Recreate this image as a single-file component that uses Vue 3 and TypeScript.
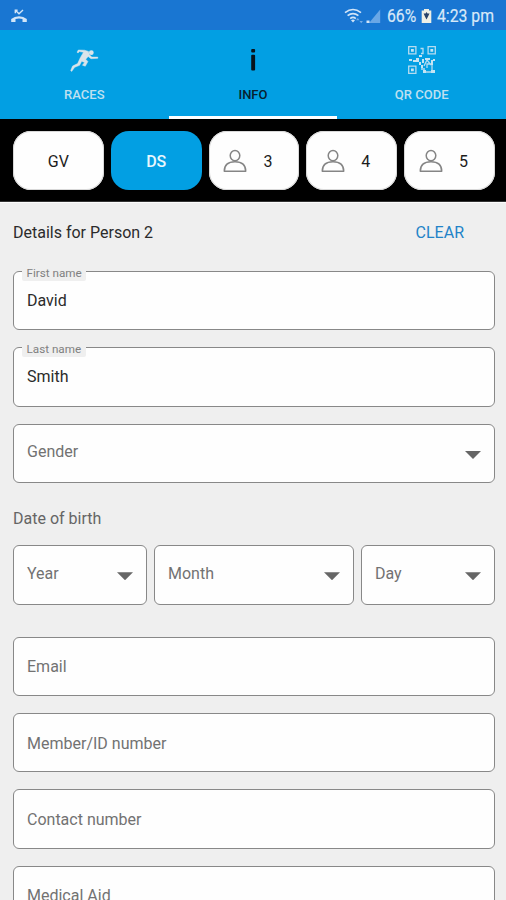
<script setup lang="ts">
import { ref } from 'vue'

interface Chip { label: string; icon: boolean }
interface Field { label: string; value?: string }

const chips: Chip[] = [
  { label: 'GV', icon: false },
  { label: 'DS', icon: false },
  { label: '3', icon: true },
  { label: '4', icon: true },
  { label: '5', icon: true },
]
const activeChip = ref(1)
const named: Field[] = [
  { label: 'First name', value: 'David' },
  { label: 'Last name', value: 'Smith' },
]
const dateParts = ['Year', 'Month', 'Day']
const contact = ['Email', 'Member/ID number', 'Contact number', 'Medical Aid']
</script>

<template>
  <div class="screen">
    <header class="status">
      <svg class="missed" width="18" height="16" viewBox="0 0 18 16">
        <path d="M5.300 5.300V2M4.600 2.200h3M5.400 2.300l3.600 3.400L13 2" fill="none" stroke="#d3e5f8" stroke-width="1.400" />
        <path d="M1.200 14V11Q4.500 8.300 9 8.300t7.800 2.700v3h-4.300v-3Q9 10 5.500 11v3Z" fill="#d3e5f8" />
      </svg>
      <div class="indicators">
        <svg class="wifi" width="20" height="17" viewBox="0 0 20 17">
          <g fill="none" stroke="#d3e5f8" stroke-width="1.7">
            <path d="M1 4.6Q9 -1.6 17 4.6" />
            <path d="M3.6 7.7Q9 3.4 14.4 7.7" />
            <path d="M6.2 10.6Q9 8.2 11.8 10.6" />
          </g>
          <path d="M9 14.5l-2-2.3q2-1.4 4 0Z" fill="#d3e5f8" />
          <path d="M12 12.2l1.8-2.1 1.6 2.1ZM15.5 13h3.4l-1.7 2.2Z" fill="#76aee8" />
        </svg>
        <svg class="signal" width="15" height="15" viewBox="0 0 15 15">
          <path d="M14.2 .5V14H3Z" fill="#6aa7e6" />
          <path d="M.5 11.5h3V14h-3Z" fill="#d3e5f8" />
        </svg>
        <span class="percent">66%</span>
        <svg class="battery" width="11" height="16" viewBox="0 0 11 16">
          <path d="M3 1h5v1.5h2.3V15H.7V2.500H3Z" fill="#eef0e6" />
          <path d="M2.600 5.500h2L5.500 4l1 1.500h2L6.800 9l-1.300 2.500L4.200 9Z" fill="#27436a" />
        </svg>
        <span class="clock">4:23 pm</span>
      </div>
    </header>

    <nav class="tabs">
      <button class="tab">
        <svg width="30" height="30" viewBox="0 0 30 30">
          <path
            d="M8 7.200L9.300 5 15.500 5.200 19.500 6.400 20.300 9.600 22.800 12.100 28.800 12.100 28.800 13.300 22 13.700 19.200 11.500 16.700 14.200 18.900 16.600 16.300 21.200 13.400 20.200 15.600 17.500 12.700 16.200 10.600 20.300 5.700 22.300 2.600 26.500 1.700 25.500 3.600 21 8.600 18.600 11.300 12.700 14.500 7.300 10.200 6.500 9.100 8Z"
            fill="#d9e4ea" stroke="#d9e4ea" stroke-width=".5" stroke-linejoin="round"
          />
          <circle cx="22.300" cy="7.700" r="2.400" fill="#d9e4ea" />
        </svg>
        <span>RACES</span>
      </button>
      <button class="tab active">
        <svg width="30" height="30" viewBox="0 0 30 30">
          <rect x="13.200" y="4" width="3.900" height="3.600" rx="1" fill="#08131b" />
          <rect x="13.200" y="9.800" width="3.900" height="15.800" rx="1" fill="#08131b" />
        </svg>
        <span>INFO</span>
      </button>
      <button class="tab">
        <svg width="30" height="30" viewBox="0 0 30 30">
          <g fill="none" stroke="#b5dcf0" stroke-width="1.300">
            <path d="M1.700 1.700h7.200v7.200H1.700ZM21.100 1.700h7.200v7.200h-7.200ZM1.700 21.100h7.200v7.200H1.700Z" />
            <path d="M13.500 3.500h2.500v5h-2M17 21l3-6 4 5M18 27h7v-8h-5v4M14 24h4" />
          </g>
          <g fill="#c5e4f3">
            <path d="M4 4h2.800v2.800H4ZM23.400 4h2.800v2.800h-2.800ZM4 23.400h2.800v2.800H4Z" />
            <path d="M2 14h3v2H2ZM6 15h6v2H6ZM9 13h3v2H9ZM12 12h3v-2h-3ZM15 14h2v4h-2ZM18 13h5v2h-5ZM26 14h2v2h-2ZM12 17h2v3h-2ZM14 20h2v3h-2ZM16 25h3v3h-3ZM24 15h2v5h-2ZM24 25h4v3h-4Z" />
          </g>
        </svg>
        <span>QR CODE</span>
      </button>
    </nav>

    <div class="chips">
      <button
        v-for="(chip, i) in chips"
        :key="chip.label"
        class="chip"
        :class="{ selected: i === activeChip, person: chip.icon }"
        @click="activeChip = i"
      >
        <svg v-if="chip.icon" width="24" height="24" viewBox="0 0 24 24" fill="none" stroke="#858585" stroke-width="1.500">
          <ellipse cx="12" cy="6.600" rx="4.800" ry="5.200" />
          <path d="M1.300 22.200Q1.300 12.800 12 12.800t10.700 9.400Z" stroke-linejoin="round" />
        </svg>
        <span>{{ chip.label }}</span>
      </button>
    </div>

    <main class="form">
      <div class="heading">
        <span>Details for Person 2</span>
        <button class="clear">CLEAR</button>
      </div>

      <div class="stack">
        <div v-for="f in named" :key="f.label" class="field">
          <span class="floating">{{ f.label }}</span>
          <span class="value">{{ f.value }}</span>
        </div>
        <div class="field select">
          <span>Gender</span>
          <i class="arrow"></i>
        </div>
      </div>

      <div class="caption">Date of birth</div>
      <div class="dates">
        <div v-for="part in dateParts" :key="part" class="field select">
          <span>{{ part }}</span>
          <i class="arrow"></i>
        </div>
      </div>

      <div class="stack contact">
        <div v-for="label in contact" :key="label" class="field">
          <span>{{ label }}</span>
        </div>
      </div>
    </main>
  </div>
</template>

<style>
body {
  margin: 0;
  overflow: hidden;
}
</style>

<style scoped>
.screen {
  width: 506px;
  height: 900px;
  overflow: hidden;
  display: flex;
  flex-direction: column;
  background: #efefef;
  font-family: Roboto, "Liberation Sans", sans-serif;
  font-size: 16px;
}
button {
  border: 0;
  padding: 0;
  background: none;
  font: inherit;
}
svg {
  display: block;
  flex: none;
}
.status {
  flex: none;
  height: 30px;
  box-sizing: border-box;
  padding: 2px 11px 0 10px;
  display: flex;
  align-items: center;
  justify-content: space-between;
  background: #1976d2;
  color: #d8e8f8;
}
.indicators {
  display: flex;
  align-items: center;
  font-size: 19px;
  line-height: 28px;
}
.signal {
  margin-left: 2px;
}
.percent,
.clock {
  white-space: nowrap;
  transform: scaleX(0.83);
  transform-origin: 0 50%;
  -webkit-text-stroke: 0.2px;
}
.percent {
  width: 29px;
  margin-left: 6px;
}
.battery {
  margin-left: 5px;
}
.clock {
  width: 58px;
  margin-left: 5px;
}
.tabs {
  flex: none;
  height: 89px;
  display: grid;
  grid-template-columns: repeat(3, 1fr);
  background: #029fe3;
}
.tab {
  box-sizing: border-box;
  display: flex;
  flex-direction: column;
  align-items: center;
  padding-top: 15px;
  border-bottom: 3px solid transparent;
  color: #bfe0f0;
  font-size: 13px;
  font-weight: 500;
  line-height: 16px;
}
.tab span {
  margin-top: 12px;
}
.tab.active {
  color: #08202f;
  border-bottom-color: #fff;
}
.chips {
  flex: none;
  height: 83px;
  box-sizing: border-box;
  padding: 12px 11px 12px 13px;
  display: grid;
  grid-template-columns: repeat(5, 1fr);
  gap: 7px;
  background: #000;
  border-bottom: 1px solid #333;
}
.chip {
  height: 59px;
  border-radius: 18px;
  display: flex;
  align-items: center;
  justify-content: center;
  gap: 16px;
  background: #fefefe;
  color: #1c1c1c;
  box-shadow: inset 0 0 0 1px #d8d8d8;
}
.chip span {
  margin-top: 2px;
}
.chip.person {
  padding-right: 12px;
}
.chip.selected {
  background: #029fe3;
  color: #e9f6fd;
  font-weight: 500;
  box-shadow: none;
}
.form {
  flex: none;
  padding: 0 11px 0 13px;
  border-top: 1px solid #fcfcfc;
}
.heading {
  display: flex;
  justify-content: space-between;
  align-items: center;
  height: 58px;
  padding-right: 31px;
  color: #2b2b2b;
}
.clear {
  color: #2283c8;
}
.stack {
  display: flex;
  flex-direction: column;
  gap: 17px;
  margin-top: 10px;
}
.field {
  box-sizing: border-box;
  height: 59.4px;
  padding: 2px 13px 0;
  border: 1px solid #888;
  border-radius: 6px;
  background: #fefefe;
  color: #727272;
  display: flex;
  align-items: center;
  position: relative;
  line-height: 20px;
}
.floating {
  position: absolute;
  left: 8px;
  top: -7px;
  padding: 0 4.5px;
  border-radius: 2px;
  background: #efefef;
  color: #808080;
  font-size: 11.7px;
  line-height: 16px;
}
.value {
  margin-top: -2px;
  color: #2b2b2b;
}
.select {
  justify-content: space-between;
}
.select span {
  margin-top: -4px;
}
.arrow {
  width: 16px;
  height: 8px;
  margin-top: 1px;
  background: #666;
  clip-path: polygon(0 0, 100% 0, 50% 100%);
}
.caption {
  margin-top: 25.5px;
  line-height: 20px;
  color: #656565;
}
.dates {
  display: grid;
  grid-template-columns: 134px 1fr 134px;
  gap: 7px;
  margin-top: 16.5px;
}
.contact {
  margin-top: 32px;
}
</style>
